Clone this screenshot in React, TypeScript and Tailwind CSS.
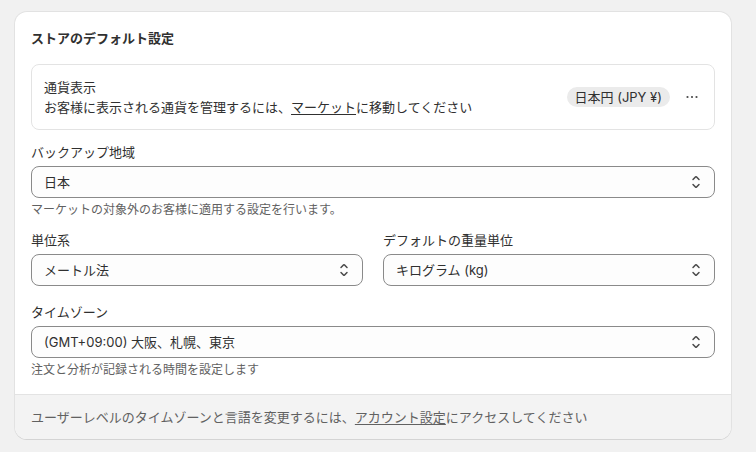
import React from "react";

const font = {
  fontFamily: 'Inter, "Noto Sans CJK JP", sans-serif',
};

function SelectIcon() {
  return (
    <svg viewBox="0 0 20 20" className="w-5 h-5 shrink-0" fill="#4a4a4a">
      <path d="M10.884 4.323a1.25 1.25 0 0 0-1.768 0l-2.646 2.647a.75.75 0 0 0 1.06 1.06l2.47-2.47 2.47 2.47a.75.75 0 1 0 1.06-1.06l-2.646-2.647Z" />
      <path d="m13.53 13.03-2.646 2.647a1.25 1.25 0 0 1-1.768 0l-2.646-2.647a.75.75 0 0 1 1.06-1.06l2.47 2.47 2.47-2.47a.75.75 0 0 1 1.06 1.06Z" />
    </svg>
  );
}

function DotsIcon() {
  return (
    <svg viewBox="0 0 20 20" className="w-5 h-5 shrink-0" fill="#4a4a4a">
      <circle cx="5.5" cy="10" r="1.1" />
      <circle cx="10" cy="10" r="1.1" />
      <circle cx="14.5" cy="10" r="1.1" />
    </svg>
  );
}

function Select({ value }: { value: string }) {
  return (
    <div className="flex items-center h-8 rounded-lg border border-[#8a8a8a] bg-[#fdfdfd] pl-3 pr-2">
      <span className="flex-1 text-[13px] leading-5 text-[#303030]">{value}</span>
      <SelectIcon />
    </div>
  );
}

function Label({ children }: { children: React.ReactNode }) {
  return <div className="text-[13px] leading-5 text-[#303030] mb-1">{children}</div>;
}

function Help({ children }: { children: React.ReactNode }) {
  return <div className="text-[12px] leading-4 text-[#616161] mt-1">{children}</div>;
}

export default function App() {
  return (
    <div className="min-h-[452px] bg-[#f1f1f1] pt-3 pl-[15px]" style={font}>
      <div className="w-[716px] rounded-xl bg-white overflow-hidden shadow-[0_1px_0_0_rgba(26,26,26,0.07),0_0_0_1px_rgba(0,0,0,0.06)]">
        <div className="px-4 pt-4 pb-4">
          <h2 className="text-[13px] leading-5 font-semibold text-[#303030]">ストアのデフォルト設定</h2>

          <div className="mt-4 flex items-center rounded-lg border border-[#e3e3e3] px-3 py-3">
            <div className="flex-1 text-[13px] leading-5 text-[#303030]">
              <div>通貨表示</div>
              <div>
                お客様に表示される通貨を管理するには、<span className="underline underline-offset-2">マーケット</span>に移動してください
              </div>
            </div>
            <div className="flex items-center gap-3">
              <span className="rounded-full bg-[#ebebeb] px-2 text-[13px] leading-5 text-[#303030]">日本円 (JPY ¥)</span>
              <DotsIcon />
            </div>
          </div>

          <div className="mt-3">
            <Label>バックアップ地域</Label>
            <Select value="日本" />
            <Help>マーケットの対象外のお客様に適用する設定を行います。</Help>
          </div>

          <div className="mt-3 grid grid-cols-2 gap-5">
            <div>
              <Label>単位系</Label>
              <Select value="メートル法" />
            </div>
            <div>
              <Label>デフォルトの重量単位</Label>
              <Select value="キログラム (kg)" />
            </div>
          </div>

          <div className="mt-4">
            <Label>タイムゾーン</Label>
            <Select value="(GMT+09:00) 大阪、札幌、東京" />
            <Help>注文と分析が記録される時間を設定します</Help>
          </div>
        </div>
        <div className="border-t border-[#e3e3e3] bg-[#f3f3f3] px-4 py-3 text-[13px] leading-5 text-[#616161]">
          ユーザーレベルのタイムゾーンと言語を変更するには、<span className="underline underline-offset-2">アカウント設定</span>にアクセスしてください
        </div>
      </div>
    </div>
  );
}
